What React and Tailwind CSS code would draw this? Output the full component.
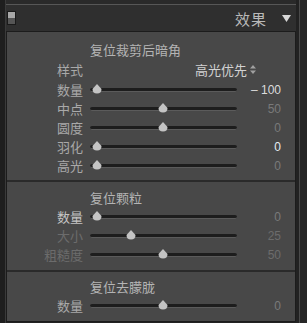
const font = { fontFamily: '"Noto Sans CJK SC", "Noto Sans", sans-serif' }

function Thumb({ pos }) {
  return (
    <svg
      width="10"
      height="10"
      viewBox="0 0 10 10"
      className="absolute top-[-4px]"
      style={{ left: `${pos}px` }}
    >
      <path d="M5 0 L9.5 5 Q9.5 9.5 5 9.5 Q0.5 9.5 0.5 5 Z" fill="#c4c4c4" />
    </svg>
  )
}

function Slider({ label, value, pos, labelColor = 'text-[#a9a9a9]', valueColor = 'text-[#7a7a7a]' }) {
  return (
    <div className="flex h-[19px] items-center">
      <div className={`w-[76px] text-right text-[13px] leading-none ${labelColor}`}>{label}</div>
      <div className="relative ml-[7px] h-[4px] w-[147px] rounded-full border-b border-[#5b5b5b] bg-[#1d1d1d]">
        <Thumb pos={pos} />
      </div>
      <div
        className={`w-[44px] text-right text-[12px] leading-none ${valueColor}`}
        style={{ fontFamily: '"Liberation Sans", sans-serif' }}
      >
        {value}
      </div>
    </div>
  )
}

function Title({ children }) {
  return (
    <div className="flex h-[19px] items-center pl-[83px] text-[13px] leading-none text-[#b4b4b4]">
      {children}
    </div>
  )
}

export default function App() {
  return (
    <div className="flex h-[323px] w-[307px] overflow-hidden bg-[#222222]" style={font}>
      <div className="w-[6px] border-r border-[#3a3a3a] bg-[#1e1e1e]" />
      <div className="flex w-[290px] flex-col pb-[1px]">
        <div className="h-[5px] border-b border-[#575757] bg-[#2a2a2a]" />
        <div className="flex h-[26px] items-center bg-[#2f2f2f] pr-[5px]">
          <div className="ml-[1px] flex h-[14px] w-[9px] flex-col border border-[#1a1a1a]">
            <div className="h-1/2 bg-[#a8a8a8]" />
            <div className="h-1/2 bg-[#555555]" />
          </div>
          <div className="ml-auto text-[15px] leading-none tracking-[1px] text-[#b9b9b9]">效果</div>
          <svg width="9" height="7" viewBox="0 0 9 7" className="ml-[15px]">
            <path d="M0 0 H9 L4.5 7 Z" fill="#d8d8d8" />
          </svg>
        </div>
        <div className="flex flex-1 flex-col border border-[#1c1c1c] bg-[#484848]">
          <div className="pt-[8px] pb-[5px]">
            <Title>复位裁剪后暗角</Title>
            <div className="flex h-[21px] items-center">
              <div className="w-[76px] text-right text-[13px] leading-none text-[#a9a9a9]">样式</div>
              <div className="ml-auto flex w-[100px] items-center text-[13px] leading-none text-[#d2d2d2]">
                高光优先
                <svg width="6" height="9" viewBox="0 0 6 9" className="ml-[3px]">
                  <path d="M3 0 L6 3.5 H0 Z M3 9 L6 5.5 H0 Z" fill="#a0a0a0" />
                </svg>
              </div>
            </div>
            <Slider label="数量" value="– 100" pos={2} valueColor="text-[#dcdcdc]" />
            <Slider label="中点" value="50" pos={68} />
            <Slider label="圆度" value="0" pos={68} />
            <Slider label="羽化" value="0" pos={2} valueColor="text-[#e6ecf2]" />
            <Slider label="高光" value="0" pos={2} />
          </div>
          <div className="h-[2px] bg-[#2a2a2a]" />
          <div className="pt-[6px] pb-[6px]">
            <Title>复位颗粒</Title>
            <Slider label="数量" value="0" pos={2} labelColor="text-[#c4c4c4]" />
            <Slider label="大小" value="25" pos={36} labelColor="text-[#6c6c6c]" valueColor="text-[#6c6c6c]" />
            <Slider label="粗糙度" value="50" pos={68} labelColor="text-[#6c6c6c]" valueColor="text-[#6c6c6c]" />
          </div>
          <div className="h-[2px] bg-[#2a2a2a]" />
          <div className="pt-[5px]">
            <Title>复位去朦胧</Title>
            <Slider label="数量" value="0" pos={68} />
          </div>
        </div>
      </div>
      <div className="ml-[3px] w-[1px] bg-[#4a4a4a]" />
      <div className="flex-1 bg-[#262626]" />
    </div>
  )
}
